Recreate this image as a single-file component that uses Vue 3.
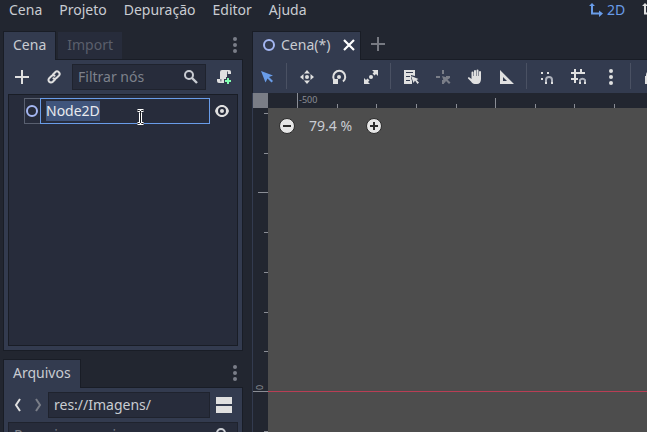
<script setup>
import { ref, onMounted } from 'vue'

const menus = ['Cena', 'Projeto', 'Depuração', 'Editor', 'Ajuda']
const filter = ref('')
const path = ref('res://Imagens/')
const search = ref('')
const nodeName = ref('Node2D')
const nameField = ref(null)

const topTicks = Array.from({ length: 60 }, (_, i) => ({
  at: Math.round(29.2 + i * 39.6),
  size: i % 10 === 0 ? 15 : i % 5 === 0 ? 10 : 4,
}))
const sideTicks = Array.from({ length: 40 }, (_, i) => ({
  at: Math.round(5 + i * 39.7),
  size: i % 10 === 7 ? 15 : i % 5 === 2 ? 10 : 4,
}))

onMounted(() => {
  nameField.value.focus()
  nameField.value.select()
})
</script>

<template>
  <div class="editor">
    <header class="topbar">
      <nav class="menus">
        <button v-for="m in menus" :key="m" class="menu">{{ m }}</button>
      </nav>
      <nav class="spaces">
        <button class="space active">
          <svg class="icon" viewBox="0 0 16 16" fill="currentColor"><path d="M4 1 7 4H5v6.500h6V8.500l4 3-4 3.500v-2.500H3V4H1z" /></svg>
          2D
        </button>
        <button class="space" aria-label="3D">
          <svg class="icon" viewBox="0 0 16 16" fill="currentColor"><path d="M4 1 7 4H5v6.500h6V8.500l4 3-4 3.500v-2.500H3V4H1z" /></svg>
        </button>
      </nav>
    </header>

    <div class="body">
      <aside class="docks">
        <section class="dock scene-dock">
          <div class="tabs">
            <button class="tab on">Cena</button>
            <button class="tab off">Import</button>
            <button class="more" aria-label="Opções">
              <svg class="icon" viewBox="0 0 16 16" fill="currentColor"><circle cx="8" cy="2" r="2" /><circle cx="8" cy="8" r="2" /><circle cx="8" cy="14" r="2" /></svg>
            </button>
          </div>
          <div class="panel">
            <div class="tools">
              <button class="tool" aria-label="Adicionar">
                <svg class="icon" viewBox="0 0 16 16" fill="currentColor"><path d="M7 1h2v6h6v2H9v6H7V9H1V7h6z" /></svg>
              </button>
              <button class="tool" aria-label="Instanciar">
                <svg class="icon" viewBox="0 0 16 16" fill="none" stroke="currentColor" stroke-width="2" stroke-linecap="round"><path d="M7 5.500 9.200 3.200a2.500 2.500 0 0 1 3.600 3.600L10.500 9a2.500 2.500 0 0 1-3 .3M9 10.500l-2.200 2.300a2.500 2.500 0 0 1-3.600-3.600L5.500 7a2.500 2.500 0 0 1 3-.3" /></svg>
              </button>
              <label class="field filter">
                <input v-model="filter" placeholder="Filtrar nós" aria-label="Filtrar nós" />
                <svg class="icon" viewBox="0 0 16 16" fill="none" stroke="currentColor" stroke-width="2"><circle cx="6" cy="6" r="4" /><path d="m9 9 5 5" stroke-width="2.400" /></svg>
              </label>
              <button class="tool" aria-label="Anexar script">
                <svg class="icon" viewBox="0 0 16 16"><path fill="#e0e0e0" d="M6 1a2 2 0 0 0-2 2v7H1v2a2 2 0 0 0 2 2h6v-3h2V5h4V3a2 2 0 0 0-2-2z" /><path fill="#333b4f" d="M4.500 10h.8v2.500h-.8zM11 2.500h.8V5H11z" /><path fill="#333b4f" d="M10 8h4v2h2v4h-2v2h-4v-2H8v-4h2z" /><path fill="#84ffb1" d="M11 9h2v2h2v2h-2v2h-2v-2H9v-2h2z" /></svg>
              </button>
            </div>
            <div class="tree">
              <div class="row">
                <span class="node-icon">
                  <svg class="icon" viewBox="0 0 16 16" fill="none" stroke="#a5b7f3" stroke-width="2"><circle cx="8" cy="8" r="5" /></svg>
                </span>
                <input ref="nameField" v-model="nodeName" class="rename" aria-label="Nome do nó" />
                <button class="eye" aria-label="Visibilidade">
                  <svg class="icon" viewBox="0 0 16 16"><path fill="#e0e0e0" fill-rule="evenodd" d="M8 2C4.500 2 2 4.500 1 8c1 3.500 3.500 6 7 6s6-2.500 7-6c-1-3.500-3.500-6-7-6zm0 2a4 4 0 1 1 0 8 4 4 0 0 1 0-8zm0 2a2 2 0 1 0 0 4 2 2 0 0 0 0-4z" /></svg>
                </button>
                <svg class="ibeam" viewBox="0 0 9 18"><path d="M1.500 2.500h2l1 1 1-1h2M4.500 3v12M1.500 15.500h2l1-1 1 1h2" fill="none" stroke="#fff" stroke-width="3" /><path d="M1.500 2.500h2l1 1 1-1h2M4.500 3v12M1.500 15.500h2l1-1 1 1h2" fill="none" stroke="#15171c" stroke-width="1" /></svg>
              </div>
            </div>
          </div>
        </section>

        <section class="dock files-dock">
          <div class="tabs">
            <button class="tab on">Arquivos</button>
            <button class="more" aria-label="Opções">
              <svg class="icon" viewBox="0 0 16 16" fill="currentColor"><circle cx="8" cy="2" r="2" /><circle cx="8" cy="8" r="2" /><circle cx="8" cy="14" r="2" /></svg>
            </button>
          </div>
          <div class="panel">
            <div class="tools paths">
              <button class="step" aria-label="Voltar">
                <svg class="icon" viewBox="0 0 16 16" fill="none" stroke="currentColor" stroke-width="2"><path d="m10 2-4 6 4 6" /></svg>
              </button>
              <button class="step dim" aria-label="Avançar">
                <svg class="icon" viewBox="0 0 16 16" fill="none" stroke="currentColor" stroke-width="2"><path d="m6 2 4 6-4 6" /></svg>
              </button>
              <label class="field"><input v-model="path" aria-label="Caminho" /></label>
              <button class="tool" aria-label="Dividir painel">
                <svg class="icon" viewBox="0 0 16 16" fill="currentColor"><path d="M0 0h16v7H0zM0 9h16v7H0z" /></svg>
              </button>
            </div>
            <label class="field files-search">
              <input v-model="search" placeholder="Pesquisar arquivos" aria-label="Pesquisar arquivos" />
              <svg class="icon" viewBox="0 0 16 16" fill="none" stroke="currentColor" stroke-width="2"><circle cx="6" cy="6" r="4" /><path d="m9 9 5 5" stroke-width="2.400" /></svg>
            </label>
          </div>
        </section>
      </aside>

      <main class="work">
        <div class="tabs">
          <div class="tab on scene-tab">
            <svg class="icon" viewBox="0 0 16 16" fill="none" stroke="#a5b7f3" stroke-width="2"><circle cx="8" cy="8" r="5" /></svg>
            <span>Cena(*)</span>
            <button class="close" aria-label="Fechar">
              <svg class="icon" viewBox="0 0 16 16" fill="none" stroke="#fff" stroke-width="2.200"><path d="m3 3 10 10M13 3 3 13" /></svg>
            </button>
          </div>
          <button class="add" aria-label="Nova cena">
            <svg class="icon" viewBox="0 0 16 16" fill="currentColor"><path d="M7 1h2v6h6v2H9v6H7V9H1V7h6z" /></svg>
          </button>
        </div>
        <div class="toolbar">
          <button class="tool picked" aria-label="Selecionar">
            <svg class="icon" viewBox="0 0 16 16" fill="currentColor"><path d="m2 2 4.500 11.500 2-4 4 4 1.500-1.500-4-4 4-1.500z" /></svg>
          </button>
          <i class="sep"></i>
          <button class="tool" aria-label="Mover">
            <svg class="icon" viewBox="0 0 16 16" fill="currentColor"><circle cx="8" cy="8" r="2" /><path d="m8 1 3 3.500H5zM8 15l3-3.500H5zM1 8l3.500-3v6zM15 8l-3.500-3v6z" /></svg>
          </button>
          <button class="tool" aria-label="Rotacionar">
            <svg class="icon" viewBox="0 0 16 16" fill="currentColor"><circle cx="8" cy="8" r="2" /><path d="M4.500 12.500A6 6 0 1 1 12 12.500" fill="none" stroke="currentColor" stroke-width="2" /><path d="M2 10h5v5H2z" /></svg>
          </button>
          <button class="tool" aria-label="Escalar">
            <svg class="icon" viewBox="0 0 16 16" fill="currentColor"><circle cx="8" cy="8" r="2" /><path d="M9 1h6v6l-2-2-1.500 1.500-2-2L11 3zM7 15H1V9l2 2 1.500-1.500 2 2L5 13z" /></svg>
          </button>
          <i class="sep"></i>
          <button class="tool" aria-label="Lista de seleção">
            <svg class="icon" viewBox="0 0 16 16" fill="currentColor"><path d="M1 1h11v6l-4-1v3l1 3v3H1zm2 2v1h7V3zm0 4v1h4V7zm0 4v1h4v-1z" fill-rule="evenodd" /><path d="m8 7 2.500 7 1.500-2.500L14.500 15l1.500-1.500-2.500-2.500L15.500 10z" /></svg>
          </button>
          <button class="tool dim" aria-label="Pivô">
            <svg class="icon" viewBox="0 0 16 16" fill="currentColor"><path d="M7 1h2v4H7zM1 7h4v2H1zM11 7h4v2h-4zM7 11h2v4H7z" /><path d="m7 7 2.500 7.500 1.500-2.500 3 3 1.500-1.500-3-3 2.500-1z" /></svg>
          </button>
          <button class="tool" aria-label="Deslocar">
            <svg class="icon" viewBox="0 0 16 16" fill="currentColor"><path d="M7 2a1 1 0 0 1 2 0v5h.5V1.500a1 1 0 0 1 2 0V7h.5V3a1 1 0 0 1 2 0v7c0 3-1.500 5-4 5H7.500c-1.500 0-2.500-1-3.500-2.500L1 9.500c-.5-1 .8-1.500 1.500-1L4.500 10V3.500a1 1 0 0 1 2 0V7H7z" /></svg>
          </button>
          <button class="tool" aria-label="Régua">
            <svg class="icon" viewBox="0 0 16 16" fill="currentColor"><path d="M1 1v14h14zm3 7 4 4H4z" fill-rule="evenodd" /></svg>
          </button>
          <i class="sep"></i>
          <button class="tool" aria-label="Encaixe inteligente">
            <svg class="icon" viewBox="0 0 16 16" fill="currentColor"><path d="M2 3h2v2H2zM8 3h2v2H8zM2 9h2v2H2z" /><path d="M7 13v-2a3 3 0 0 1 6 0v2" fill="none" stroke="#aeb2bc" stroke-width="2" /><path d="M6 13h2v2H6zM12 13h2v2h-2z" /></svg>
          </button>
          <button class="tool" aria-label="Encaixe na grade">
            <svg class="icon" viewBox="0 0 16 16" fill="currentColor"><path d="M3 0h2v3h4V0h2v3h3v2H5v4h2v2H5v3H3v-3H0V9h3V5H0V3h3z" /><path d="M9 13v-2a3 3 0 0 1 5 0v2" fill="none" stroke="#aeb2bc" stroke-width="2" /><path d="M8 13h2v2H8zM13 13h2v2h-2z" /></svg>
          </button>
          <button class="tool" aria-label="Opções de encaixe">
            <svg class="icon" viewBox="0 0 16 16" fill="currentColor"><circle cx="8" cy="2" r="2" /><circle cx="8" cy="8" r="2" /><circle cx="8" cy="14" r="2" /></svg>
          </button>
          <i class="sep"></i>
          <button class="tool" aria-label="Bloquear">
            <svg class="icon" viewBox="0 0 16 16" fill="currentColor"><path d="M2 7h12v8H2z" /><path d="M4 8V6a4 4 0 0 1 8 0v2" fill="none" stroke="currentColor" stroke-width="2" /></svg>
          </button>
        </div>
        <div class="canvas">
          <div class="corner"></div>
          <div class="ruler-top">
            <svg class="ticks">
              <rect v-for="t in topTicks" :key="t.at" :x="t.at" :y="15 - t.size" width="1" :height="t.size" />
              <text x="31" y="10">-500</text>
            </svg>
          </div>
          <div class="ruler-side">
            <svg class="ticks">
              <rect v-for="t in sideTicks" :key="t.at" :x="15 - t.size" :y="t.at" :width="t.size" height="1" />
              <text transform="translate(10 282) rotate(-90)">0</text>
            </svg>
          </div>
          <div class="view">
            <svg class="axis"><rect x="0" y="283" width="100%" height="1" /></svg>
            <div class="zoom">
              <button aria-label="Reduzir">
                <svg class="icon" viewBox="0 0 16 16"><circle cx="8" cy="8" r="7.500" fill="#e6e6e6" stroke="#2c2c2c" /><path d="M4 7h8v2H4z" fill="#2c2c2c" /></svg>
              </button>
              <button class="percent">79.4 %</button>
              <button aria-label="Ampliar">
                <svg class="icon" viewBox="0 0 16 16"><circle cx="8" cy="8" r="7.500" fill="#e6e6e6" stroke="#2c2c2c" /><path d="M7 4h2v3h3v2H9v3H7V9H4V7h3z" fill="#2c2c2c" /></svg>
              </button>
            </div>
          </div>
        </div>
      </main>
    </div>
  </div>
</template>

<style>
body {
  background: #222630;
}
</style>

<style scoped>
.editor {
  height: 100vh;
  display: flex;
  flex-direction: column;
  overflow: hidden;
  background: #222630;
  color: #c9ccd2;
  font: 14px/20px "Noto Sans", sans-serif;
}
.editor * {
  box-sizing: border-box;
}
button {
  display: flex;
  align-items: center;
  justify-content: center;
  padding: 0;
  border: 0;
  background: none;
  color: inherit;
  font: inherit;
}
input {
  min-width: 0;
  flex: 1;
  padding: 0;
  border: 0;
  outline: 0;
  background: none;
  color: inherit;
  font: inherit;
}
input::placeholder {
  color: #7d818b;
  opacity: 1;
}
.icon {
  display: block;
  flex: none;
  width: 16px;
  height: 16px;
}
.topbar {
  display: flex;
  flex: none;
  justify-content: space-between;
  height: 31px;
  padding-left: 9px;
}
.menus {
  display: flex;
  gap: 17px;
  height: 20px;
}
.spaces {
  display: flex;
  gap: 16px;
  width: 59px;
  height: 20px;
}
.space {
  gap: 3px;
  color: #e0e0e0;
}
.space.active {
  color: #699ce8;
}
.body {
  display: flex;
  flex: 1;
  min-height: 0;
  gap: 9px;
  padding-left: 3px;
}
.docks {
  display: flex;
  flex: none;
  flex-direction: column;
  width: 240px;
  gap: 8px;
}
.dock {
  display: flex;
  flex: none;
  flex-direction: column;
}
.files-dock {
  flex: 1;
}
.tabs {
  display: flex;
  flex: none;
  height: 28px;
}
.tab {
  margin-bottom: -1px;
  padding: 0 9px 2px;
  border: 1px solid #191d26;
  border-bottom: 0;
}
.tab.on {
  position: relative;
  background: #333b4f;
}
.tab.off {
  margin: 0 0 0 1px;
  border-color: #222630;
  background: #272c3b;
  color: #5a5f6b;
}
.more {
  width: 16px;
  margin-left: auto;
  color: #7a7e88;
}
.panel {
  display: flex;
  flex: 1;
  flex-direction: column;
  gap: 4px;
  padding: 4px;
  border: 1px solid #191d26;
  background: #333b4f;
}
.tools {
  display: flex;
  height: 26px;
  gap: 4px;
}
.tool {
  flex: none;
  width: 28px;
  color: #e0e0e0;
}
.field {
  display: flex;
  flex: 1;
  align-items: center;
  min-width: 0;
  padding: 0 6px 0 5px;
  border: 1px solid #1f232e;
  background: #272c3b;
  color: #c9ccd2;
}
.tree {
  min-height: 252px;
  padding: 3px;
  border: 1px solid #191d26;
  background: #272c3b;
}
.row {
  position: relative;
  display: flex;
  height: 26px;
  padding-left: 12px;
}
.node-icon {
  display: flex;
  align-items: center;
  width: 16px;
  box-shadow: inset 1px 1px #596070, inset 0 -1px #596070;
}
.rename {
  padding: 0 5px;
  border: 1px solid #699ce8;
  color: #e8eaee;
}
.rename::selection {
  background: #40557c;
  color: #e8eaee;
}
.eye {
  width: 24px;
}
.ibeam {
  position: absolute;
  left: 124px;
  top: 10px;
  width: 9px;
  height: 18px;
}
.paths {
  gap: 0;
}
.step {
  width: 20px;
  color: #e0e0e0;
}
.dim {
  color: #7a7e88;
}
.files-search {
  flex: none;
  height: 26px;
}
.work {
  display: flex;
  flex: 1;
  flex-direction: column;
  min-width: 0;
}
.scene-tab {
  display: flex;
  align-items: center;
  gap: 4px;
  padding: 0 3px 2px 8px;
}
.scene-tab .close {
  margin-left: 7px;
}
.add {
  width: 34px;
  padding-bottom: 2px;
  color: #777a82;
}
.toolbar {
  display: flex;
  flex: none;
  gap: 4px;
  height: 34px;
  overflow: hidden;
  border: solid #191d26;
  border-width: 1px 0 0 1px;
  background: #333b4f;
}
.sep {
  flex: none;
  width: 1px;
  margin: 3px 2px 4px 1px;
  background: #4a5163;
}
.picked {
  color: #699ce8;
}
.canvas {
  display: grid;
  flex: 1;
  grid-template: 15px 1fr / 15px 1fr;
  min-height: 0;
  border-left: 1px solid #333b4f;
}
.corner {
  background: #7a7d86;
}
.ruler-top,
.ruler-side,
.view {
  position: relative;
  overflow: hidden;
}
.ticks,
.axis {
  position: absolute;
  inset: 0;
  width: 100%;
  height: 100%;
}
.ticks {
  fill: #8a8d95;
  font-size: 9px;
}
.view {
  background: #4d4d4d;
}
.axis {
  fill: #b83e55;
}
.zoom {
  position: absolute;
  left: 11px;
  top: 8px;
  display: flex;
  align-items: center;
}
.percent {
  width: 71px;
}
</style>
